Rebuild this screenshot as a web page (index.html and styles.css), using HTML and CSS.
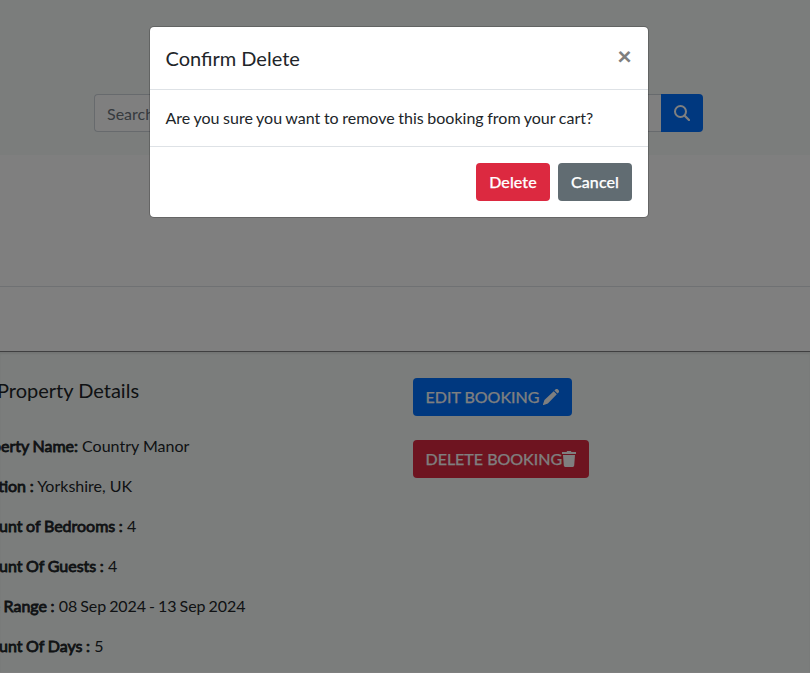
FILE: index.html
```html
<!DOCTYPE html>
<html lang="en">
<head>
<meta charset="utf-8">
<title>Confirm Delete</title>
<link rel="stylesheet" href="styles.css">
</head>
<body>
<main class="page">
  <section class="search-area">
    <form class="search">
      <div class="search-input">Search</div>
      <button class="search-btn" type="button" aria-label="Search"><svg width="16" height="16" viewBox="0 0 16 16" fill="none" stroke="currentColor"><circle cx="6.5" cy="6.5" r="5.5" stroke-width="2"/><path d="M10.5 10.5L15 15" stroke-width="2.2" stroke-linecap="round"/></svg></button>
    </form>
  </section>
  <section class="band"></section>
  <section class="band-low"></section>
  <section class="booking">
    <div class="details">
      <h5>Property Details</h5>
      <p class="name"><strong>Property Name:</strong> Country Manor</p>
      <p><strong>Location :</strong> Yorkshire, UK</p>
      <p><strong>Amount of Bedrooms :</strong> 4</p>
      <p><strong>Amount Of Guests :</strong> 4</p>
      <p><strong>Date Range :</strong> <span class="dates">08 Sep 2024 - 13 Sep 2024</span></p>
      <p><strong>Amount Of Days :</strong> 5</p>
    </div>
    <div class="actions">
      <button class="btn primary" type="button">EDIT BOOKING <svg width="16" height="16" viewBox="0 0 16 16" fill="currentColor"><path d="M11.400 1.500l.9-.9a2 2 0 0 1 2.800 0l.3.3a2 2 0 0 1 0 2.800l-.9.9zM10.700 2.200l3.100 3.100-8.700 8.900a2 2 0 0 1-.8.500L.6 15.950a.5.5 0 0 1-.6-.6l1.200-3.700a2 2 0 0 1 .5-.8z"/></svg></button>
      <button class="btn danger" type="button">DELETE BOOKING<svg width="14" height="16" viewBox="0 0 14 16" fill="currentColor"><path d="M0 1h4.500l.7-1h3.600l.7 1H14v2H0zM1 4h12l-.8 10.600a1.500 1.500 0 0 1-1.500 1.400H3.300a1.500 1.500 0 0 1-1.500-1.400z"/></svg></button>
    </div>
  </section>
</main>
<div class="backdrop">
  <div class="modal" role="dialog">
    <header class="modal-header"><h5>Confirm Delete</h5><button class="close" type="button" aria-label="Close">×</button></header>
    <div class="modal-body">Are you sure you want to remove this booking from your cart?</div>
    <footer class="modal-footer"><button class="btn danger" type="button">Delete</button><button class="btn secondary" type="button">Cancel</button></footer>
  </div>
</div>
</body>
</html>
```
FILE: styles.css
```css
* { box-sizing: border-box; }
body { margin: 0; height: 673px; overflow: hidden; background: #fff; color: #212529; font: 400 16px/1.5 Lato, sans-serif; }
.page { width: 810px; height: 673px; overflow: hidden; display: flex; flex-direction: column; }
.search-area { height: 155px; padding: 94px 107px 0 94px; background: #f6fbf8; flex: none; }
.search { display: flex; height: 38px; }
.search-input { flex: 1; padding: 7px 12px; line-height: 24px; color: #6c757d; background: #fff; border: 1px solid #ced4da; border-right: 0; border-radius: 4px 0 0 4px; }
.search-btn { display: flex; align-items: center; justify-content: center; width: 42px; padding: 0; color: #fff; background: #0071ff; border: 0; border-radius: 0 4px 4px 0; }
.band { flex: none; height: 132px; border-bottom: 1px solid #dee2e6; }
.band-low { flex: none; height: 64px; }
.booking { flex: none; display: flex; height: 321px; padding-top: 26px; background: #f6fbf8; border-top: 1px solid #808182; box-shadow: inset 0 2px 2px #0001; }
h5 { margin: 0; font-size: 20px; font-weight: 400; line-height: 30px; }
.details { width: 447px; margin-left: -34px; flex: none; white-space: nowrap; }
.details h5 { margin: -3px 0 29px 31px; }
.details p { margin: 0 0 16px; }
.details .name { padding-left: 2px; }
.details strong { font-weight: 400; word-spacing: -.5px; -webkit-text-stroke: .8px currentColor; }
.dates { word-spacing: -1px; letter-spacing: -.05px; }
.actions { display: flex; flex-direction: column; align-items: flex-start; gap: 24px; }
.btn { height: 38px; padding: 0 12.500px; border: 0; border-radius: 4px; color: #fff; font: 400 16px/38px Lato, sans-serif; white-space: pre; -webkit-text-stroke: .25px currentColor; }
.btn svg { vertical-align: -2px; margin-left: -.5px; margin-right: .5px; }
.primary { background: #0071ff; }
.danger { background: #dc2940; }
.secondary { background: #616c72; }
.backdrop { position: absolute; inset: 0; padding-top: 26px; background: rgba(0, 0, 0, .5); }
.modal { width: 500px; margin-left: 149px; background: #fff; background-clip: padding-box; border: 1px solid rgba(0, 0, 0, .2); border-radius: 5px; }
.modal-header { display: flex; justify-content: space-between; height: 63px; padding: 16px 16px 16px 15.500px; border-bottom: 1px solid #dee2e6; }
.close { height: 54px; margin: -16px; width: 48px; padding: 16px 15px 16px 16px; border: 0; background: none; color: #7f7f7f; font: 900 25px/24px Lato, sans-serif; }
.modal-body { padding: 16px 15.500px; height: 56px; word-spacing: -.5px; }
.modal-footer { display: flex; justify-content: flex-end; gap: 8px; padding: 16px 16px; border-top: 1px solid #dee2e6; }
.modal-footer .btn { width: 74px; font-weight: 500; letter-spacing: .1px; }
```
